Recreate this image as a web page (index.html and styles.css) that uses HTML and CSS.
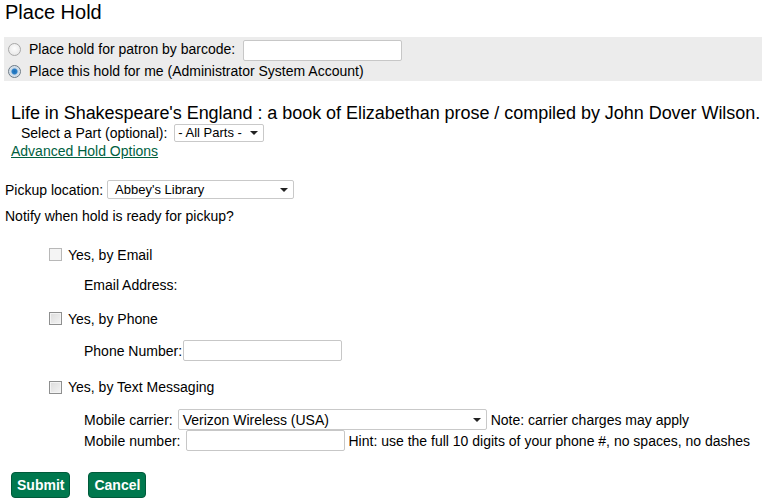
FILE: index.html
```html
<!DOCTYPE html>
<html>
<head>
<meta charset="utf-8">
<title>Place Hold</title>
<link rel="stylesheet" href="styles.css">
</head>
<body>
<h1 class="title">Place Hold</h1>
<div class="who">
  <div class="who-row who-row1">
    <input type="radio" name="who" class="radio">
    <span class="who-text">Place hold for patron by barcode:</span>
    <input type="text" class="text-input barcode">
  </div>
  <div class="who-row who-row2">
    <input type="radio" name="who" class="radio" checked>
    <span class="who-text">Place this hold for me (Administrator System Account)</span>
  </div>
</div>
<div class="book-title">Life in Shakespeare's England : a book of Elizabethan prose / compiled by John Dover Wilson.</div>
<div class="part-row">
  <span>Select a Part (optional):</span>
  <span class="select sel-part"><span class="select-val">- All Parts -</span></span>
</div>
<div class="adv-row"><a href="#" class="adv-link">Advanced Hold Options</a></div>
<div class="pickup-row">
  <span>Pickup location:</span>
  <span class="select sel-pickup"><span class="select-val">Abbey's Library</span></span>
</div>
<div class="notify-row">Notify when hold is ready for pickup?</div>
<div class="notify">
  <div class="check-row row-email">
    <span class="checkbox disabled"></span>
    <span class="check-label">Yes, by Email</span>
  </div>
  <div class="sub-row row-email-addr"><span class="sub-label">Email Address:</span></div>
  <div class="check-row row-phone">
    <span class="checkbox"></span>
    <span class="check-label">Yes, by Phone</span>
  </div>
  <div class="sub-row row-phone-num"><span class="sub-label">Phone Number:</span><input type="text" class="text-input phone"></div>
  <div class="check-row row-sms">
    <span class="checkbox"></span>
    <span class="check-label">Yes, by Text Messaging</span>
  </div>
  <div class="sub-row row-carrier">
    <span class="sub-label gap-right">Mobile carrier:</span>
    <span class="select sel-carrier"><span class="select-val">Verizon Wireless (USA)</span></span>
    <span class="note">Note: carrier charges may apply</span>
  </div>
  <div class="sub-row row-mobile">
    <span class="sub-label gap-right">Mobile number:</span>
    <input type="text" class="text-input mobile">
    <span class="note">Hint: use the full 10 digits of your phone #, no spaces, no dashes</span>
  </div>
</div>
<div class="buttons">
  <button class="btn btn-submit">Submit</button>
  <button class="btn btn-cancel">Cancel</button>
</div>
</body>
</html>
```
FILE: styles.css
```css
html, body {
  margin: 0;
  padding: 0;
  background: #fff;
}
body {
  font-family: "Liberation Sans", Arial, sans-serif;
  font-size: 14px;
  color: #000;
  width: 762px;
  overflow: hidden;
}
.title {
  margin: 0 0 0 5px;
  font-size: 20px;
  font-weight: normal;
  line-height: 24px;
  height: 24px;
}
.who {
  margin: 13px 0 0 4px;
  background: #ececec;
  height: 44px;
}
.who-row {
  display: flex;
  align-items: center;
}
.who-row1 { height: 24px; }
.who-row2 { height: 20px; }
.radio {
  appearance: none;
  -webkit-appearance: none;
  width: 13px;
  height: 13px;
  margin: 0 8px 0 4px;
  border-radius: 50%;
  border: 1px solid #a8a8a8;
  background: radial-gradient(circle at 50% 40%, #fdfdfd 0%, #e2e2e2 100%);
  box-sizing: border-box;
}
.radio:checked {
  border-color: #6c7a86;
  background: radial-gradient(circle at 50% 50%, #1b6db5 0, #2b80c8 2.5px, #c7d7e6 3.5px, #f0f4f8 100%);
}
.who-text {
  line-height: 16px;
}
.text-input {
  box-sizing: border-box;
  height: 21px;
  border: 1px solid #c7c7c7;
  border-radius: 2px;
  background: #fff;
  padding: 0 3px;
  font: 13px "Liberation Sans", Arial, sans-serif;
  margin: 0;
  outline: none;
}
.barcode {
  width: 159px;
  margin-left: 8px;
  margin-top: 3px;
}
.book-title {
  margin: 22px 0 0 11px;
  font-size: 18px;
  letter-spacing: -0.04px;
  line-height: 20px;
  height: 20px;
  white-space: nowrap;
}
.part-row {
  height: 19px;
  display: flex;
  align-items: center;
  padding-left: 21px;
}
.select {
  display: inline-flex;
  align-items: center;
  box-sizing: border-box;
  border: 1px solid #c9c9c9;
  border-radius: 2px;
  background: #fff;
  font-size: 13px;
  position: relative;
  white-space: nowrap;
}
.select::after {
  content: "";
  position: absolute;
  top: 50%;
  margin-top: -2px;
  right: 5px;
  border-left: 4px solid transparent;
  border-right: 4px solid transparent;
  border-top: 4px solid #222;
}
.sel-part {
  width: 90px;
  height: 18px;
  margin-left: 7px;
  padding-left: 3px;
}
.adv-row {
  height: 18px;
  display: flex;
  align-items: center;
  padding-left: 11px;
}
.adv-link {
  color: #005f3f;
  text-decoration: underline;
}
.pickup-row {
  margin-top: 20px;
  height: 19px;
  display: flex;
  align-items: center;
  padding-left: 5px;
}
.sel-pickup {
  width: 187px;
  height: 19px;
  margin-left: 4px;
  padding-left: 7px;
}
.notify-row {
  margin-top: 8px;
  height: 18px;
  display: flex;
  align-items: center;
  padding-left: 5px;
}
.notify {
  padding-left: 49px;
}
.check-row {
  display: flex;
  align-items: center;
  height: 19px;
}
.checkbox {
  width: 13px;
  height: 13px;
  box-sizing: border-box;
  border: 1px solid #8e8f8f;
  background: linear-gradient(135deg, #dcdcdc 0%, #f4f4f4 100%);
  box-shadow: inset 0 0 0 1px #f4f4f4;
  margin-right: 6px;
}
.checkbox.disabled {
  border-color: #b8b8b8;
  background: #f4f4f4;
  box-shadow: none;
}
.sub-row {
  display: flex;
  align-items: center;
  padding-left: 35px;
  white-space: nowrap;
}
.gap-right { margin-right: 5px; }
.note { margin-left: 4px; }
.row-email { margin-top: 20px; }
.row-email-addr { margin-top: 12px; height: 18px; }
.row-phone { margin-top: 15px; }
.row-phone-num { margin-top: 12px; height: 21px; }
.phone { width: 159px; margin-left: 1px; }
.row-sms { margin-top: 16px; height: 20px; }
.row-carrier { margin-top: 12px; height: 21px; }
.sel-carrier {
  width: 309px;
  height: 21px;
  padding-left: 4px;
  font-size: 14px;
}
.row-mobile { height: 21px; }
.mobile { width: 159px; }
.buttons {
  margin-top: 21px;
  padding-left: 11px;
  display: flex;
  gap: 18px;
}
.btn {
  height: 26px;
  padding: 0 5px;
  background: #00784e;
  border: 1px solid #005a3a;
  border-radius: 4px;
  color: #fff;
  font: bold 14px "Liberation Sans", Arial, sans-serif;
  margin: 0;
}
```
